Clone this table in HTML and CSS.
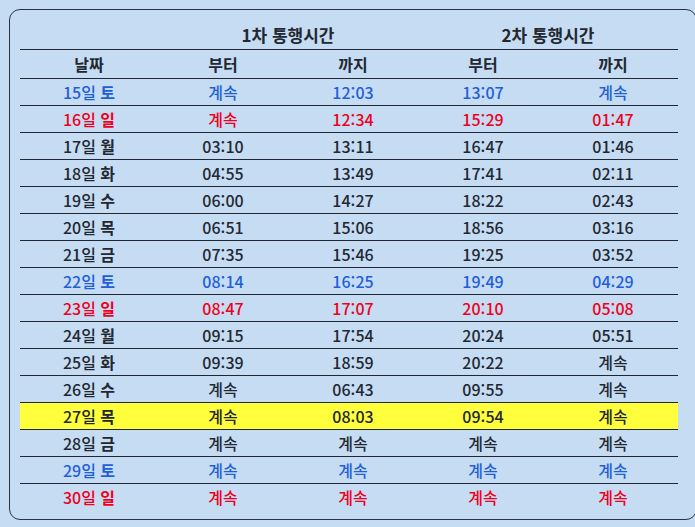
FILE: index.html
```html
<!DOCTYPE html>
<html lang="ko">
<head>
<meta charset="utf-8">
<link rel="stylesheet" href="styles.css">
</head>
<body>
<div class="card">
<table class="tbl">
<colgroup><col class="c1"><col class="c"><col class="c"><col class="c"><col class="c"></colgroup>
<thead>
<tr class="h1"><th></th><th colspan="2">1차 통행시간</th><th colspan="2">2차 통행시간</th></tr>
<tr class="h2"><th>날짜</th><th>부터</th><th>까지</th><th>부터</th><th>까지</th></tr>
</thead>
<tbody>
<tr class="sat"><td>15일 <b>토</b></td><td>계속</td><td>12:03</td><td>13:07</td><td>계속</td></tr>
<tr class="sun"><td>16일 <b>일</b></td><td>계속</td><td>12:34</td><td>15:29</td><td>01:47</td></tr>
<tr><td>17일 <b>월</b></td><td>03:10</td><td>13:11</td><td>16:47</td><td>01:46</td></tr>
<tr><td>18일 <b>화</b></td><td>04:55</td><td>13:49</td><td>17:41</td><td>02:11</td></tr>
<tr><td>19일 <b>수</b></td><td>06:00</td><td>14:27</td><td>18:22</td><td>02:43</td></tr>
<tr><td>20일 <b>목</b></td><td>06:51</td><td>15:06</td><td>18:56</td><td>03:16</td></tr>
<tr><td>21일 <b>금</b></td><td>07:35</td><td>15:46</td><td>19:25</td><td>03:52</td></tr>
<tr class="sat"><td>22일 <b>토</b></td><td>08:14</td><td>16:25</td><td>19:49</td><td>04:29</td></tr>
<tr class="sun"><td>23일 <b>일</b></td><td>08:47</td><td>17:07</td><td>20:10</td><td>05:08</td></tr>
<tr><td>24일 <b>월</b></td><td>09:15</td><td>17:54</td><td>20:24</td><td>05:51</td></tr>
<tr><td>25일 <b>화</b></td><td>09:39</td><td>18:59</td><td>20:22</td><td>계속</td></tr>
<tr><td>26일 <b>수</b></td><td>계속</td><td>06:43</td><td>09:55</td><td>계속</td></tr>
<tr class="today"><td>27일 <b>목</b></td><td>계속</td><td>08:03</td><td>09:54</td><td>계속</td></tr>
<tr><td>28일 <b>금</b></td><td>계속</td><td>계속</td><td>계속</td><td>계속</td></tr>
<tr class="sat"><td>29일 <b>토</b></td><td>계속</td><td>계속</td><td>계속</td><td>계속</td></tr>
<tr class="sun last"><td>30일 <b>일</b></td><td>계속</td><td>계속</td><td>계속</td><td>계속</td></tr>
</tbody>
</table>
</div>
</body>
</html>
```
FILE: styles.css
```css
html, body {
  margin: 0;
  padding: 0;
  background: #c6dcf3;
}
body {
  padding: 9px 0 0 9px;
  font-family: "Noto Sans CJK KR", "Noto Sans", sans-serif;
  color: #222831;
}
.card {
  width: 668px;
  height: 498px;
  border: 1px solid #2b3440;
  border-radius: 11px;
  padding: 11px 8px 0 10px;
}
.tbl {
  width: 658px;
  border-collapse: collapse;
  table-layout: fixed;
}
.c1 { width: 138px; }
.c { width: 130px; }
.tbl th, .tbl td {
  padding: 0;
  text-align: center;
  border-bottom: 1px solid #1e2733;
  white-space: nowrap;
}
.tbl th {
  height: 28px;
  font-size: 16px;
  font-weight: 700;
  line-height: 28px;
}
.h1 th { font-size: 17px; }
.tbl td {
  height: 26px;
  font-size: 16px;
  font-weight: 500;
  line-height: 26px;
}
.tbl td b { font-weight: 700; }
.sat td { color: #1f5fd8; }
.sun td { color: #ee0020; }
.today td { background: #ffff3c; }
.last td { border-bottom: none; }
```
